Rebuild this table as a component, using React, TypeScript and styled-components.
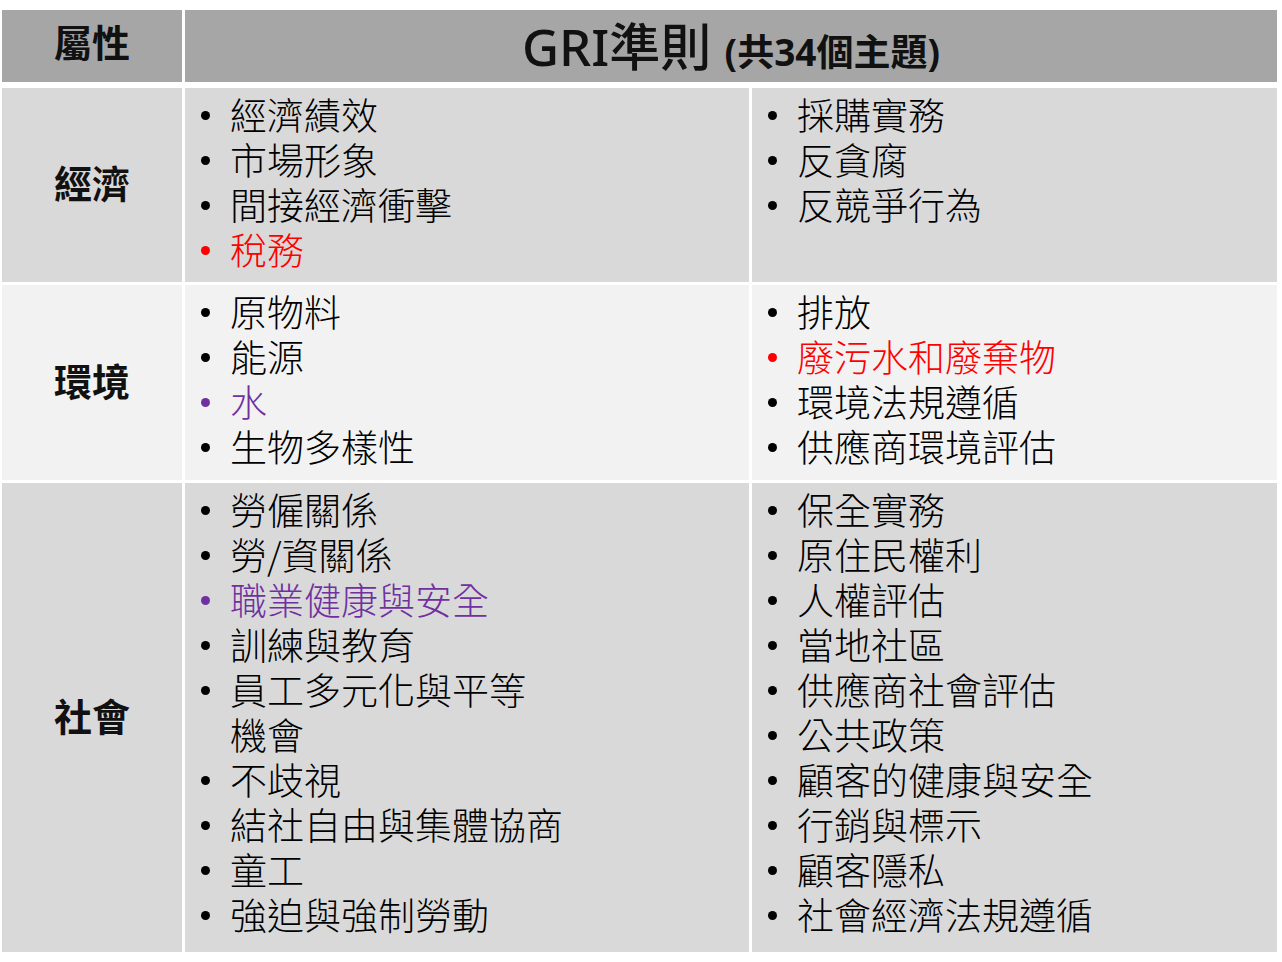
import styled, { createGlobalStyle } from "styled-components";

const GlobalStyle = createGlobalStyle`
  body {
    margin: 0;
    background: #fff;
    font-family: "Noto Sans", "Noto Sans CJK TC", sans-serif;
  }
`;

type Item = { text: string; color?: "red" | "purple" };

const Rows: { label: string; tone: "dark" | "light"; height: number; left: Item[]; right: Item[] }[] = [
  {
    label: "經濟",
    tone: "dark",
    height: 194,
    left: [
      { text: "經濟績效" },
      { text: "市場形象" },
      { text: "間接經濟衝擊" },
      { text: "稅務", color: "red" },
    ],
    right: [{ text: "採購實務" }, { text: "反貪腐" }, { text: "反競爭行為" }],
  },
  {
    label: "環境",
    tone: "light",
    height: 195,
    left: [
      { text: "原物料" },
      { text: "能源" },
      { text: "水", color: "purple" },
      { text: "生物多樣性" },
    ],
    right: [
      { text: "排放" },
      { text: "廢污水和廢棄物", color: "red" },
      { text: "環境法規遵循" },
      { text: "供應商環境評估" },
    ],
  },
  {
    label: "社會",
    tone: "dark",
    height: 469,
    left: [
      { text: "勞僱關係" },
      { text: "勞/資關係" },
      { text: "職業健康與安全", color: "purple" },
      { text: "訓練與教育" },
      { text: "員工多元化與平等\n機會" },
      { text: "不歧視" },
      { text: "結社自由與集體協商" },
      { text: "童工" },
      { text: "強迫與強制勞動" },
    ],
    right: [
      { text: "保全實務" },
      { text: "原住民權利" },
      { text: "人權評估" },
      { text: "當地社區" },
      { text: "供應商社會評估" },
      { text: "公共政策" },
      { text: "顧客的健康與安全" },
      { text: "行銷與標示" },
      { text: "顧客隱私" },
      { text: "社會經濟法規遵循" },
    ],
  },
];

const colors = { red: "#ff0000", purple: "#7030a0" };

export default function App() {
  return (
    <>
      <GlobalStyle />
      <Table>
        <HeadCell>
          <Label $head>屬性</Label>
        </HeadCell>
        <HeadCell $span>
          <Title>
            GRI準則 <Sub>(共34個主題)</Sub>
          </Title>
        </HeadCell>
        <HeadGap />
        {Rows.map((row) => (
          <RowGroup key={row.label}>
            <LabelCell $tone={row.tone} style={{ height: row.height }}>
              <Label>{row.label}</Label>
            </LabelCell>
            {[row.left, row.right].map((list, i) => (
              <ListCell key={i} $tone={row.tone}>
                <List>
                  {list.map((item) => (
                    <Entry key={item.text} $color={item.color ? colors[item.color] : "#000"}>
                      <Dot />
                      <EntryText>{item.text}</EntryText>
                    </Entry>
                  ))}
                </List>
              </ListCell>
            ))}
          </RowGroup>
        ))}
      </Table>
    </>
  );
}

const Table = styled.div`
  display: grid;
  grid-template-columns: 180px 564px 525px;
  column-gap: 3px;
  row-gap: 3px;
  width: 1275px;
  margin: 10px 0 0 2px;
  font-family: "Noto Sans", "Noto Sans CJK TC", sans-serif;
  color: #000;
`;

const HeadCell = styled.div<{ $span?: boolean }>`
  grid-column: ${(p) => (p.$span ? "2 / 4" : "1")};
  height: 72px;
  background: #a6a6a6;
  display: flex;
  align-items: center;
  justify-content: center;
`;

const HeadGap = styled.div`
  grid-column: 1 / 4;
  height: 0;
`;

const RowGroup = styled.div`
  display: contents;
`;

const Title = styled.div`
  font-size: 51px;
  font-weight: 500;
  line-height: 1;
  white-space: nowrap;
  color: #111;
`;

const Sub = styled.span`
  font-size: 37px;
  font-weight: 700;
`;

const Label = styled.div<{ $head?: boolean }>`
  font-family: "Noto Sans CJK TC", sans-serif;
  font-size: 38px;
  font-weight: 700;
  line-height: 1;
  margin-bottom: ${(p) => (p.$head ? "10px" : "6px")};
  color: #111;
`;

const LabelCell = styled.div<{ $tone: "dark" | "light" }>`
  background: ${(p) => (p.$tone === "dark" ? "#d9d9d9" : "#f2f2f2")};
  display: flex;
  align-items: center;
  justify-content: center;
`;

const ListCell = styled.div<{ $tone: "dark" | "light" }>`
  background: ${(p) => (p.$tone === "dark" ? "#d9d9d9" : "#f2f2f2")};
  padding: 4px 0 0 0;
`;

const List = styled.ul`
  list-style: none;
  margin: 0;
  padding: 0;
`;

const Entry = styled.li<{ $color: string }>`
  display: flex;
  align-items: flex-start;
  color: ${(p) => p.$color};
  font-family: "Noto Sans CJK TC", sans-serif;
  font-size: 37px;
  font-weight: 300;
  line-height: 45px;
`;

const Dot = styled.span`
  flex: none;
  width: 9px;
  height: 9px;
  border-radius: 50%;
  background: currentColor;
  margin: 19px 20px 0 16px;
`;

const EntryText = styled.span`
  white-space: pre-line;
`;
